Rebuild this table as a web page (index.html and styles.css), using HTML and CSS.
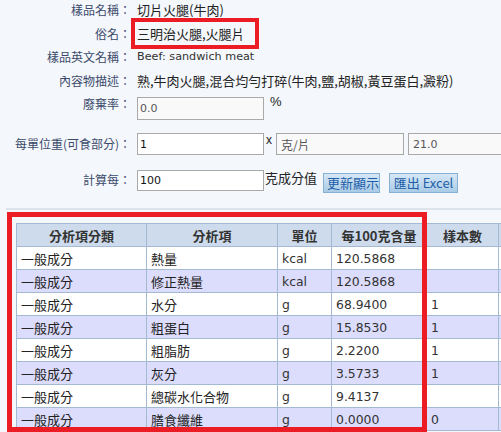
FILE: index.html
```html
<!DOCTYPE html>
<html lang="zh-Hant">
<head>
<meta charset="utf-8">
<title>樣品資料</title>
<link rel="stylesheet" href="styles.css">
</head>
<body>
<div class="form">
  <div class="row">
    <div class="lbl">樣品名稱：</div>
    <div class="val">切片火腿(牛肉)</div>
  </div>
  <div class="row">
    <div class="lbl">俗名：</div>
    <div class="val"><span class="mark">三明治火腿,火腿片</span></div>
  </div>
  <div class="row">
    <div class="lbl">樣品英文名稱：</div>
    <div class="val en">Beef: sandwich meat</div>
  </div>
  <div class="row">
    <div class="lbl">內容物描述：</div>
    <div class="val">熟,牛肉火腿,混合均勻打碎(牛肉,鹽,胡椒,黃豆蛋白,澱粉)</div>
  </div>
  <div class="row r5">
    <div class="lbl">廢棄率：</div>
    <input class="inp ro" type="text" value="0.0" readonly>
    <span class="pct">%</span>
  </div>
  <div class="row r6">
    <div class="lbl">每單位重(可食部分)：</div>
    <input class="inp" type="text" value="1">
    <span class="times">x</span>
    <input class="inp ro unit" type="text" value="克/片" readonly>
    <input class="inp ro wt" type="text" value="21.0" readonly>
  </div>
  <div class="row r7">
    <div class="lbl">計算每：</div>
    <input class="inp" type="text" value="100">
    <span class="suffix">克成分值</span>
    <button class="btn b1" type="button">更新顯示</button>
    <button class="btn b2" type="button">匯出 Excel</button>
  </div>
</div>
<div class="sep"></div>
<div class="result">
  <table class="grid">
    <colgroup>
      <col class="c1"><col class="c2"><col class="c3"><col class="c4"><col class="c5"><col class="c6">
    </colgroup>
    <thead>
      <tr><th>分析項分類</th><th>分析項</th><th>單位</th><th>每100克含量</th><th>樣本數</th><th></th></tr>
    </thead>
    <tbody>
      <tr><td>一般成分</td><td>熱量</td><td class="n">kcal</td><td class="n">120.5868</td><td class="n"></td><td class="n"></td></tr>
      <tr class="alt"><td>一般成分</td><td>修正熱量</td><td class="n">kcal</td><td class="n">120.5868</td><td class="n"></td><td class="n"></td></tr>
      <tr><td>一般成分</td><td>水分</td><td class="n">g</td><td class="n">68.9400</td><td class="n">1</td><td class="n"></td></tr>
      <tr class="alt"><td>一般成分</td><td>粗蛋白</td><td class="n">g</td><td class="n">15.8530</td><td class="n">1</td><td class="n"></td></tr>
      <tr><td>一般成分</td><td>粗脂肪</td><td class="n">g</td><td class="n">2.2200</td><td class="n">1</td><td class="n"></td></tr>
      <tr class="alt"><td>一般成分</td><td>灰分</td><td class="n">g</td><td class="n">3.5733</td><td class="n">1</td><td class="n"></td></tr>
      <tr><td>一般成分</td><td>總碳水化合物</td><td class="n">g</td><td class="n">9.4137</td><td class="n"></td><td class="n"></td></tr>
      <tr class="alt"><td>一般成分</td><td>膳食纖維</td><td class="n">g</td><td class="n">0.0000</td><td class="n">0</td><td class="n"></td></tr>
    </tbody>
  </table>
  <div class="redbox"></div>
</div>
</body>
</html>
```
FILE: styles.css
```css
html, body {
  margin: 0;
  padding: 0;
  overflow: hidden;
}
body {
  background: #f4f7fb;
  font-family: "Noto Sans CJK TC", sans-serif;
  color: #222;
  width: 501px;
  height: 432px;
}
.form {
  margin-top: -2px;
}
.row {
  display: flex;
  align-items: center;
  height: 23.5px;
}
.lbl {
  width: 131px;
  flex: none;
  text-align: right;
  font-size: 12px;
  color: #3b4a6c;
  margin-right: 6px;
  white-space: nowrap;
}
.val {
  font-size: 13px;
  white-space: nowrap;
}
.val.en {
  font-family: "DejaVu Sans", sans-serif;
  font-size: 11.2px;
  color: #333;
}
.mark {
  display: inline-block;
  line-height: 23px;
  padding: 0 10px 0 2px;
  margin-left: -2px;
  outline: 4px solid #ec1c24;
}
.r5 {
  height: 28px;
  align-items: flex-start;
}
.r5 .lbl {
  line-height: 24px;
}
.r5 .inp {
  margin-top: 5px;
  height: 23px;
}
.pct {
  font-family: "Liberation Sans", sans-serif;
  font-size: 13px;
  line-height: 15px;
  margin-top: 2px;
  margin-left: 6px;
}
.r6 {
  margin-top: 13px;
  height: 22px;
  align-items: flex-start;
}
.r6 .lbl {
  line-height: 22px;
}
.times {
  font-family: "Liberation Sans", sans-serif;
  font-size: 12px;
  line-height: 12px;
  margin: 1px 4px 0 2px;
}
.r7 {
  margin-top: 15px;
  height: 23px;
  align-items: flex-start;
}
.r7 .lbl {
  line-height: 20px;
}
.r7 .inp {
  height: 21px;
}
.suffix {
  font-size: 13px;
  line-height: 16px;
  margin-left: 1px;
  white-space: nowrap;
}
.inp {
  box-sizing: border-box;
  width: 127px;
  height: 22px;
  margin: 0;
  border: 1px solid #a9a9a9;
  background: #fff;
  padding: 0 2px;
  font-family: "DejaVu Sans", sans-serif;
  font-size: 11px;
  color: #111;
  flex: none;
}
.inp.ro {
  background: #f9f9f9;
  color: #555;
}
.inp.unit {
  width: 128px;
  font-family: "Noto Sans CJK TC", sans-serif;
  font-size: 12px;
  padding-left: 4px;
}
.inp.wt {
  width: 130px;
  margin-left: 4px;
  padding-left: 4px;
}
.btn {
  box-sizing: border-box;
  height: 20px;
  margin: 3px 0 0 0;
  padding: 0 3px;
  border: 1px solid #86b0d4;
  background: linear-gradient(#d6e7f5, #aacbe6);
  color: #1d5ea8;
  font-family: "Noto Sans CJK TC", sans-serif;
  font-size: 13px;
  line-height: 18px;
  white-space: nowrap;
  flex: none;
}
.b1 {
  width: 57px;
  margin-left: 6px;
}
.b2 {
  width: 69px;
  margin-left: 9px;
}
.sep {
  margin: 15px 0 0 6px;
  height: 2px;
  background: #dde3ea;
}
.result {
  position: relative;
  padding: 13px 0 0 16px;
}
.grid {
  border-collapse: collapse;
  table-layout: fixed;
  width: 562px;
  border: 1px solid #a3bad2;
}
.c1 { width: 130px; }
.c2 { width: 131px; }
.c3 { width: 54px; }
.c4 { width: 95px; }
.c5 { width: 72px; }
.c6 { width: 80px; }
.grid th,
.grid td {
  border: 1px solid #a3bad2;
  padding: 0 4px;
  height: 22px;
  line-height: 21px;
  white-space: nowrap;
  overflow: hidden;
}
.grid th {
  background: #cddbec;
  font-size: 13px;
  font-weight: bold;
  color: #333;
  text-align: center;
}
.grid td {
  background: #fff;
  font-size: 13px;
  color: #222;
  text-align: left;
}
.grid tr.alt td {
  background: #dcdcfc;
}
.grid td.n {
  font-family: "DejaVu Sans", sans-serif;
  font-size: 12.4px;
  color: #333;
}
.redbox {
  position: absolute;
  left: 7px;
  top: 2px;
  width: 420px;
  height: 220px;
  box-sizing: border-box;
  border: 5px solid #ec1c24;
  pointer-events: none;
}
```
